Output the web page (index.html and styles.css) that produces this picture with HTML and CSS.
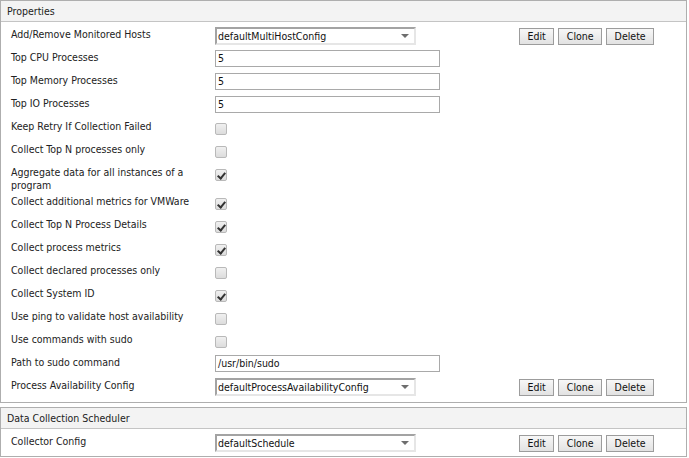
FILE: index.html
```html
<!DOCTYPE html>
<html>
<head>
<meta charset="utf-8">
<link rel="stylesheet" href="styles.css">
</head>
<body>
<div class="section">
  <div class="section-head">Properties</div>
  <div class="section-body">
    <div class="row">
      <div class="label">Add/Remove Monitored Hosts</div>
      <div class="ctrl"><div class="select"><span>defaultMultiHostConfig</span><span class="arrow"></span></div></div>
      <div class="actions"><button class="btn">Edit</button><button class="btn">Clone</button><button class="btn">Delete</button></div>
    </div>
    <div class="row">
      <div class="label">Top CPU Processes</div>
      <div class="ctrl"><div class="text">5</div></div>
    </div>
    <div class="row">
      <div class="label">Top Memory Processes</div>
      <div class="ctrl"><div class="text">5</div></div>
    </div>
    <div class="row">
      <div class="label">Top IO Processes</div>
      <div class="ctrl"><div class="text">5</div></div>
    </div>
    <div class="row">
      <div class="label">Keep Retry If Collection Failed</div>
      <div class="ctrl"><span class="cb"></span></div>
    </div>
    <div class="row">
      <div class="label">Collect Top N processes only</div>
      <div class="ctrl"><span class="cb"></span></div>
    </div>
    <div class="row">
      <div class="label">Aggregate data for all instances of a program</div>
      <div class="ctrl"><span class="cb on"></span></div>
    </div>
    <div class="row">
      <div class="label">Collect additional metrics for VMWare</div>
      <div class="ctrl"><span class="cb on"></span></div>
    </div>
    <div class="row">
      <div class="label">Collect Top N Process Details</div>
      <div class="ctrl"><span class="cb on"></span></div>
    </div>
    <div class="row">
      <div class="label">Collect process metrics</div>
      <div class="ctrl"><span class="cb on"></span></div>
    </div>
    <div class="row">
      <div class="label">Collect declared processes only</div>
      <div class="ctrl"><span class="cb"></span></div>
    </div>
    <div class="row">
      <div class="label">Collect System ID</div>
      <div class="ctrl"><span class="cb on"></span></div>
    </div>
    <div class="row">
      <div class="label">Use ping to validate host availability</div>
      <div class="ctrl"><span class="cb"></span></div>
    </div>
    <div class="row">
      <div class="label">Use commands with sudo</div>
      <div class="ctrl"><span class="cb"></span></div>
    </div>
    <div class="row">
      <div class="label">Path to sudo command</div>
      <div class="ctrl"><div class="text">/usr/bin/sudo</div></div>
    </div>
    <div class="row">
      <div class="label">Process Availability Config</div>
      <div class="ctrl"><div class="select"><span>defaultProcessAvailabilityConfig</span><span class="arrow"></span></div></div>
      <div class="actions"><button class="btn">Edit</button><button class="btn">Clone</button><button class="btn">Delete</button></div>
    </div>
  </div>
</div>
<div class="section second">
  <div class="section-head">Data Collection Scheduler</div>
  <div class="section-body">
    <div class="row">
      <div class="label">Collector Config</div>
      <div class="ctrl"><div class="select"><span>defaultSchedule</span><span class="arrow"></span></div></div>
      <div class="actions"><button class="btn">Edit</button><button class="btn">Clone</button><button class="btn">Delete</button></div>
    </div>
  </div>
</div>
</body>
</html>
```
FILE: styles.css
```css
html, body {
  margin: 0;
  padding: 0;
  background: #ffffff;
}
body {
  font-family: "DejaVu Sans Condensed", "DejaVu Sans", sans-serif;
  font-size: 10.5px;
  color: #222222;
  width: 689px;
  height: 458px;
  overflow: hidden;
}
.section {
  width: 687px;
  box-sizing: border-box;
  border: 1px solid #aeaeae;
}
.section.second {
  margin-top: 4px;
}
.section-head {
  height: 20px;
  line-height: 21px;
  background: #f3f3f3;
  border-bottom: 1px solid #c4c4c4;
  padding-left: 6px;
  color: #222;
}
.section-body {
  padding: 0 0 6px 10px;
}
.second .section-body {
  padding-bottom: 4px;
}
.row {
  display: grid;
  grid-template-columns: 204px 304px auto;
  min-height: 23px;
  align-items: start;
}
.label {
  padding-top: 5.5px;
  line-height: 13px;
  margin-bottom: -2.5px;
  padding-right: 14px;
}
.ctrl {
  padding-top: 5px;
}
.text {
  width: 225px;
  height: 17px;
  box-sizing: border-box;
  border: 1px solid #a9a9a9;
  background: #fff;
  line-height: 15px;
  padding-left: 2px;
  font-size: 10.5px;
  color: #111;
}
.select {
  width: 201px;
  height: 18px;
  box-sizing: border-box;
  border-top: 2px solid #a3a3a3;
  border-left: 2px solid #a3a3a3;
  border-right: 2px solid #e6e6e6;
  border-bottom: 2px solid #e6e6e6;
  background: #fff;
  line-height: 14px;
  padding-left: 1px;
  display: flex;
  justify-content: space-between;
  align-items: center;
  color: #111;
}
.arrow {
  width: 0;
  height: 0;
  border-left: 4px solid transparent;
  border-right: 4px solid transparent;
  border-top: 4px solid #6e6e6e;
  margin-right: 5px;
}
.cb {
  display: block;
  width: 12px;
  height: 12px;
  box-sizing: border-box;
  margin-top: 4px;
  border: 1px solid #b9b9b9;
  border-radius: 2px;
  background: linear-gradient(#f0f0f0, #dcdcdc);
  position: relative;
}
.cb.on::after {
  content: "";
  position: absolute;
  left: 3px;
  top: 1px;
  width: 3px;
  height: 6px;
  border-right: 2px solid #333;
  border-bottom: 2px solid #333;
  transform: rotate(40deg);
}
.actions {
  display: flex;
  gap: 4px;
  padding-top: 6px;
}
.btn {
  font-family: "DejaVu Sans Condensed", "DejaVu Sans", sans-serif;
  font-size: 10.5px;
  color: #111;
  height: 17px;
  line-height: 15px;
  padding: 0 7.5px;
  margin: 0;
  border: 1px solid #9c9c9c;
  border-radius: 0;
  background: linear-gradient(#f7f7f7, #e2e2e2);
}
```
